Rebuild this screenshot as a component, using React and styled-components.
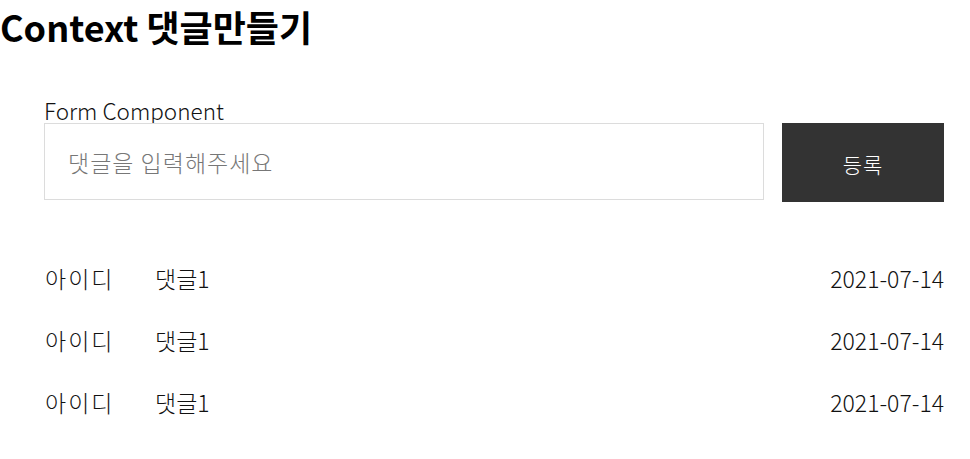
import React from "react";
import styled, { createGlobalStyle } from "styled-components";

const GlobalStyle = createGlobalStyle`
  body {
    margin: 0;
    background: #fff;
    color: #111;
    font-family: "Noto Sans CJK KR", "Noto Sans", sans-serif;
  }
`;

const Title = styled.h1`
  margin: 0;
  font-size: 36px;
  line-height: 52px;
  font-weight: 700;
  color: #000;
`;

const Section = styled.div`
  width: 900px;
  margin: 45px 0 0 44px;
`;

const Label = styled.div`
  font-size: 22.5px;
  line-height: 26px;
  font-weight: 300;
  color: #111;
`;

const FormRow = styled.form`
  display: flex;
  align-items: flex-start;
  gap: 18px;
  margin: 0;
`;

const Input = styled.input`
  box-sizing: border-box;
  width: 720px;
  height: 77px;
  padding: 0 23px;
  border: 1px solid #dcdcdc;
  outline: none;
  font-family: inherit;
  font-size: 23px;
  font-weight: 300;
  letter-spacing: 1px;
  color: #111;
  &::placeholder {
    color: #777;
  }
`;

const Submit = styled.button`
  width: 162px;
  height: 79px;
  border: none;
  background: #333;
  color: #fff;
  font-family: inherit;
  font-size: 21px;
  font-weight: 300;
  letter-spacing: 1px;
  padding-top: 4px;
  cursor: pointer;
`;

const List = styled.ul`
  list-style: none;
  margin: 45px 0 0;
  padding: 0;
`;

const Row = styled.li`
  display: flex;
  align-items: center;
  height: 62px;
  font-size: 23px;
  font-weight: 300;
  color: #111;
`;

const UserId = styled.span`
  width: 110px;
  padding-left: 1px;
  letter-spacing: 2px;
`;

const Content = styled.span`
  flex: 1;
`;

const Date = styled.span`
  text-align: right;
`;

const comments = [
  { id: 1, userid: "아이디", content: "댓글1", date: "2021-07-14" },
  { id: 2, userid: "아이디", content: "댓글1", date: "2021-07-14" },
  { id: 3, userid: "아이디", content: "댓글1", date: "2021-07-14" },
];

export default function App() {
  return (
    <>
      <GlobalStyle />
      <Title>Context 댓글만들기</Title>
      <Section>
        <Label>Form Component</Label>
        <FormRow onSubmit={(e) => e.preventDefault()}>
          <Input type="text" placeholder="댓글을 입력해주세요" />
          <Submit type="submit">등록</Submit>
        </FormRow>
        <List>
          {comments.map((c) => (
            <Row key={c.id}>
              <UserId>{c.userid}</UserId>
              <Content>{c.content}</Content>
              <Date>{c.date}</Date>
            </Row>
          ))}
        </List>
      </Section>
    </>
  );
}
